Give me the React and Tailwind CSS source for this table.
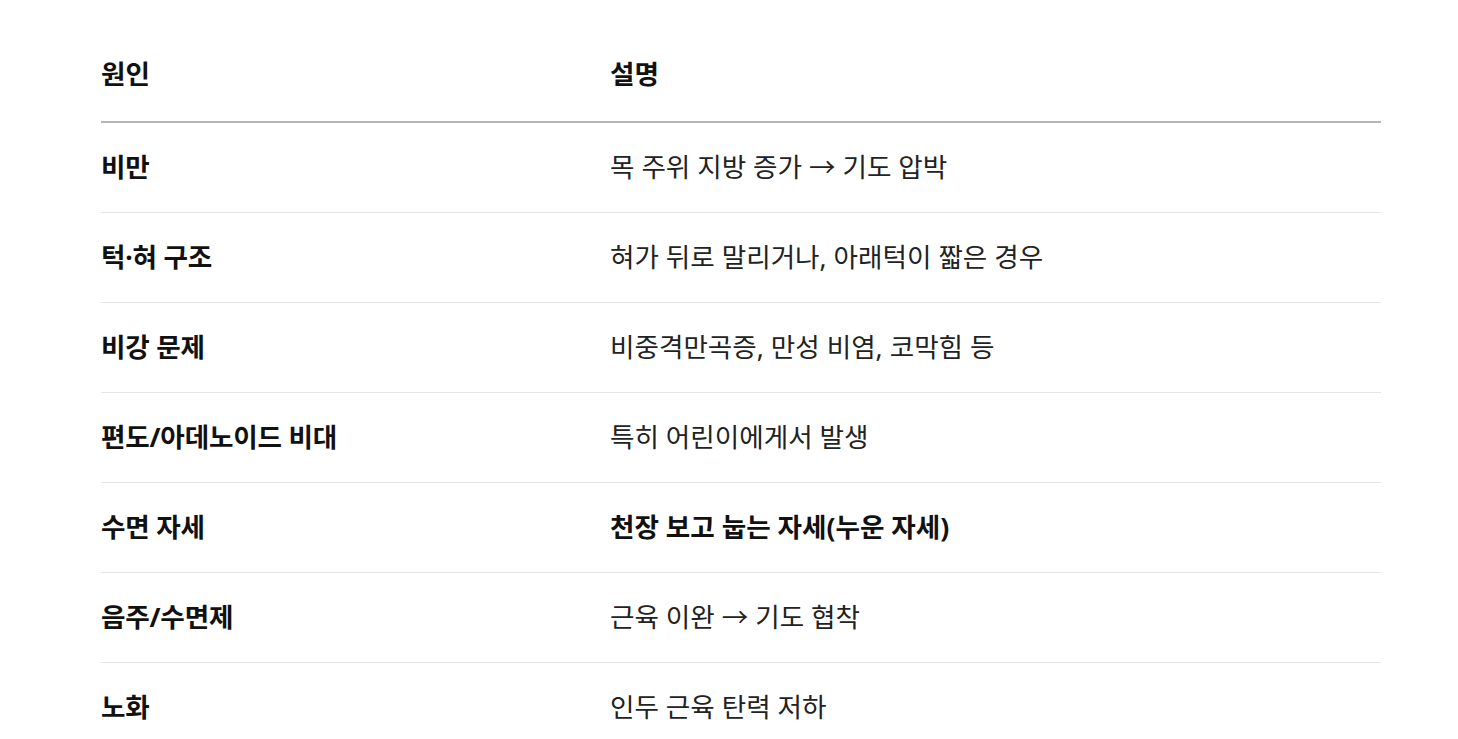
const rows = [
  { cause: "비만", desc: "목 주위 지방 증가 → 기도 압박" },
  { cause: "턱·혀 구조", desc: "혀가 뒤로 말리거나, 아래턱이 짧은 경우" },
  { cause: "비강 문제", desc: "비중격만곡증, 만성 비염, 코막힘 등" },
  { cause: "편도/아데노이드 비대", desc: "특히 어린이에게서 발생" },
  { cause: "수면 자세", desc: "천장 보고 눕는 자세(누운 자세)", strong: true },
  { cause: "음주/수면제", desc: "근육 이완 → 기도 협착" },
  { cause: "노화", desc: "인두 근육 탄력 저하" },
];

const App = () => {
  return (
    <div
      className="min-h-screen bg-white px-[101px] pt-[31px] text-[#1a1a1a]"
      style={{ fontFamily: '"Noto Sans", "Noto Sans CJK KR", sans-serif' }}
    >
      <div className="w-[1280px]">
        {/* Header */}
        <div className="grid grid-cols-[509px_1fr] h-[92px] items-center border-b-2 border-[#b5b5b5] pb-[2px] text-[26.6px] font-bold text-[#111]">
          <div>원인</div>
          <div>설명</div>
        </div>

        {/* Rows */}
        {rows.map((row, i) => (
          <div
            key={row.cause}
            className={`grid grid-cols-[509px_1fr] h-[90px] items-center text-[26.6px] ${
              i < rows.length - 1 ? "border-b border-[#e4e4e4]" : ""
            }`}
          >
            <div className="font-bold text-[#111] tracking-[-0.2px]">{row.cause}</div>
            <div className={row.strong ? "font-bold text-[#111]" : "text-[#222]"}>
              {row.desc}
            </div>
          </div>
        ))}
      </div>
    </div>
  );
};

export default App;
